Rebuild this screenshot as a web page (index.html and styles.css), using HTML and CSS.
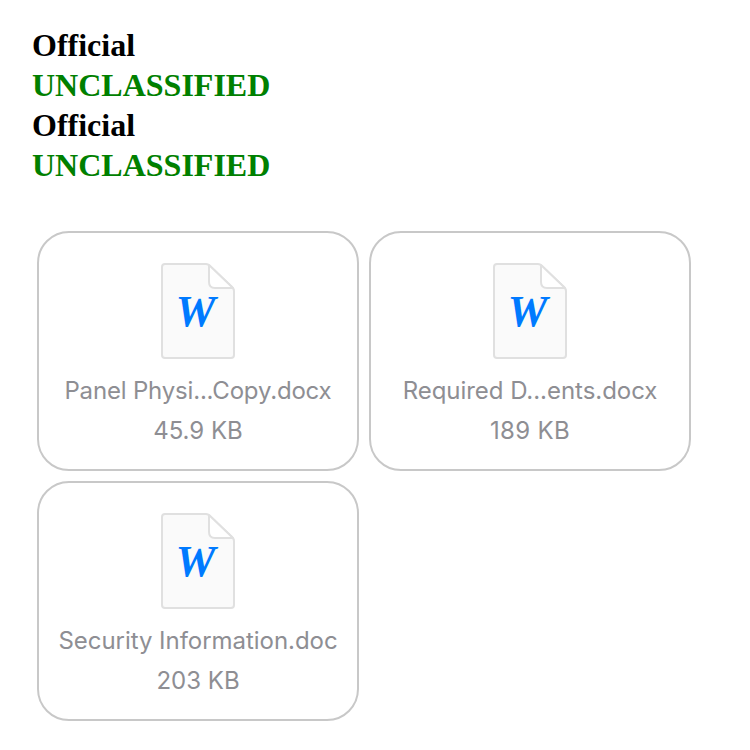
FILE: index.html
```html
<!DOCTYPE html>
<html lang="en">
<head>
  <meta charset="UTF-8">
  <title>Attachments</title>
  <link rel="stylesheet" href="styles.css">
</head>
<body>
  <div class="marking">Official</div>
  <div class="marking green">UNCLASSIFIED</div>
  <div class="marking">Official</div>
  <div class="marking green">UNCLASSIFIED</div>

  <div class="files">
    <div class="file">
      <svg class="icon" viewBox="0 0 74 96">
        <path class="page" d="M4 1H45Q47 1 49 3L71 24Q73 26 73 28V92Q73 95 70 95H4Q1 95 1 92V4Q1 1 4 1Z"/>
        <path class="fold" d="M48 2V19Q48 25 54 25H72Z"/>
        <text x="34.5" y="63">W</text>
      </svg>
      <div class="name n1">Panel Physi...Copy.docx</div>
      <div class="size">45.9 KB</div>
    </div>
    <div class="file">
      <svg class="icon" viewBox="0 0 74 96">
        <path class="page" d="M4 1H45Q47 1 49 3L71 24Q73 26 73 28V92Q73 95 70 95H4Q1 95 1 92V4Q1 1 4 1Z"/>
        <path class="fold" d="M48 2V19Q48 25 54 25H72Z"/>
        <text x="34.5" y="63">W</text>
      </svg>
      <div class="name n2">Required D...ents.docx</div>
      <div class="size wide">189 KB</div>
    </div>
    <div class="file">
      <svg class="icon" viewBox="0 0 74 96">
        <path class="page" d="M4 1H45Q47 1 49 3L71 24Q73 26 73 28V92Q73 95 70 95H4Q1 95 1 92V4Q1 1 4 1Z"/>
        <path class="fold" d="M48 2V19Q48 25 54 25H72Z"/>
        <text x="34.5" y="63">W</text>
      </svg>
      <div class="name n3">Security Information.doc</div>
      <div class="size">203 KB</div>
    </div>
  </div>
</body>
</html>
```
FILE: styles.css
```css
body {
  margin: 0;
  padding: 25px 32px 0;
  background-color: #fff;
  font-family: "Liberation Serif", "Times New Roman", serif;
}

.marking {
  font-size: 32px;
  font-weight: bold;
  line-height: 40px;
}

.green {
  color: #008000;
}

.files {
  display: flex;
  flex-wrap: wrap;
  gap: 10px;
  margin: 46px 0 0 5px;
}

.file {
  box-sizing: border-box;
  width: 322px;
  height: 240px;
  padding-top: 30px;
  border: 2px solid #c8c8c8;
  border-radius: 32px;
  text-align: center;
  font-family: Inter, sans-serif;
  font-size: 24px;
  line-height: 40px;
  color: #8e8e93;
}

.icon {
  display: block;
  width: 74px;
  height: 96px;
  margin: 0 auto 12px;
}

.page {
  fill: #fafafa;
  stroke: #e0e0e0;
  stroke-width: 2;
}

.fold {
  fill: #fff;
  stroke: #e0e0e0;
  stroke-width: 2;
  stroke-linejoin: round;
}

.icon text {
  font: italic bold 45px "Liberation Serif", serif;
  fill: #007aff;
  text-anchor: middle;
}

.n1 {
  letter-spacing: -0.18px;
}

.n2,
.n3 {
  letter-spacing: -0.04px;
}

.wide {
  letter-spacing: 0.3px;
}
```
